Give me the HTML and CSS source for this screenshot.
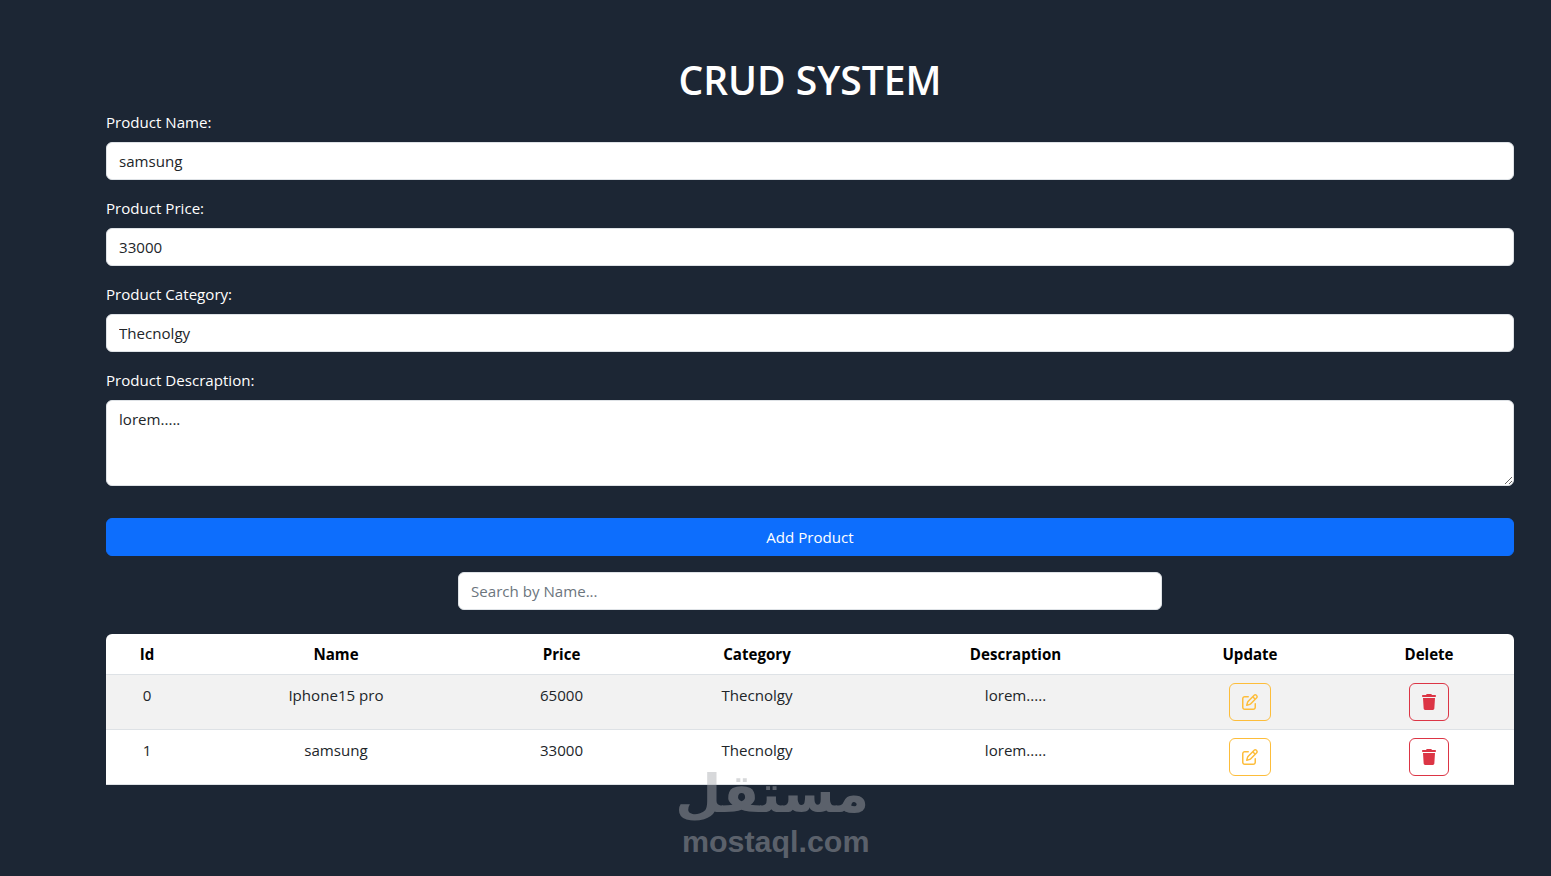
FILE: index.html
```html
<!DOCTYPE html>
<html lang="en">
<head>
    <meta charset="UTF-8">
    <meta name="viewport" content="width=device-width, initial-scale=1.0">
    <title>CRUD System</title>
    <link rel="stylesheet" href="styles.css">
</head>
<body>
    <div class="container">
        <h1 class="title">CRUD SYSTEM</h1>

        <div class="field">
            <label for="name">Product Name:</label>
            <input id="name" type="text" value="samsung">
        </div>
        <div class="field">
            <label for="price">Product Price:</label>
            <input id="price" type="text" value="33000">
        </div>
        <div class="field">
            <label for="category">Product Category:</label>
            <input id="category" type="text" value="Thecnolgy">
        </div>
        <div class="field">
            <label for="descraption">Product Descraption:</label>
            <textarea id="descraption">lorem.....</textarea>
        </div>

        <button class="add-btn">Add Product</button>

        <div class="search">
            <input type="text" placeholder="Search by Name...">
        </div>

        <table class="products">
            <colgroup>
                <col class="col-id">
                <col class="col-name">
                <col class="col-price">
                <col class="col-category">
                <col class="col-desc">
                <col class="col-update">
                <col class="col-delete">
            </colgroup>
            <thead>
                <tr>
                    <th>Id</th>
                    <th>Name</th>
                    <th>Price</th>
                    <th>Category</th>
                    <th>Descraption</th>
                    <th>Update</th>
                    <th>Delete</th>
                </tr>
            </thead>
            <tbody>
                <tr class="striped">
                    <td>0</td>
                    <td>Iphone15 pro</td>
                    <td>65000</td>
                    <td>Thecnolgy</td>
                    <td>lorem.....</td>
                    <td>
                        <button class="icon-btn update">
                            <svg viewBox="0 0 512 512"><path d="M441 58.9L453.1 71c9.4 9.4 9.4 24.6 0 33.9L424 134.1 377.9 88 407 58.9c9.4-9.4 24.6-9.4 33.9 0zM209.8 256.2L344 121.9 390.1 168 255.8 302.2c-2.9 2.9-6.5 5-10.4 6.1l-58.5 16.7 16.7-58.5c1.1-3.9 3.2-7.5 6.1-10.4zM373.1 25L175.8 222.2c-8.7 8.7-15 19.4-18.3 31.1l-28.6 100c-2.4 8.4-.1 17.4 6.1 23.6s15.2 8.5 23.6 6.1l100-28.6c11.8-3.4 22.5-9.7 31.1-18.3L487 138.9c28.1-28.1 28.1-73.7 0-101.8L474.9 25C446.8-3.1 401.2-3.1 373.1 25zM88 64C39.4 64 0 103.4 0 152V424c0 48.6 39.4 88 88 88H360c48.6 0 88-39.4 88-88V312c0-13.3-10.7-24-24-24s-24 10.7-24 24V424c0 22.1-17.9 40-40 40H88c-22.1 0-40-17.9-40-40V152c0-22.1 17.9-40 40-40H200c13.3 0 24-10.7 24-24s-10.7-24-24-24H88z"/></svg>
                        </button>
                    </td>
                    <td>
                        <button class="icon-btn delete">
                            <svg viewBox="0 0 448 512"><path d="M135.2 17.7L128 32H32C14.3 32 0 46.3 0 64S14.3 96 32 96H416c17.7 0 32-14.3 32-32s-14.3-32-32-32H320l-7.2-14.3C307.4 6.8 296.3 0 284.2 0H163.8c-12.1 0-23.2 6.8-28.6 17.7zM416 128H32L53.2 467c1.6 25.3 22.6 45 47.9 45H346.9c25.3 0 46.3-19.7 47.9-45L416 128z"/></svg>
                        </button>
                    </td>
                </tr>
                <tr>
                    <td>1</td>
                    <td>samsung</td>
                    <td>33000</td>
                    <td>Thecnolgy</td>
                    <td>lorem.....</td>
                    <td>
                        <button class="icon-btn update">
                            <svg viewBox="0 0 512 512"><path d="M441 58.9L453.1 71c9.4 9.4 9.4 24.6 0 33.9L424 134.1 377.9 88 407 58.9c9.4-9.4 24.6-9.4 33.9 0zM209.8 256.2L344 121.9 390.1 168 255.8 302.2c-2.9 2.9-6.5 5-10.4 6.1l-58.5 16.7 16.7-58.5c1.1-3.9 3.2-7.5 6.1-10.4zM373.1 25L175.8 222.2c-8.7 8.7-15 19.4-18.3 31.1l-28.6 100c-2.4 8.4-.1 17.4 6.1 23.6s15.2 8.5 23.6 6.1l100-28.6c11.8-3.4 22.5-9.7 31.1-18.3L487 138.9c28.1-28.1 28.1-73.7 0-101.8L474.9 25C446.8-3.1 401.2-3.1 373.1 25zM88 64C39.4 64 0 103.4 0 152V424c0 48.6 39.4 88 88 88H360c48.6 0 88-39.4 88-88V312c0-13.3-10.7-24-24-24s-24 10.7-24 24V424c0 22.1-17.9 40-40 40H88c-22.1 0-40-17.9-40-40V152c0-22.1 17.9-40 40-40H200c13.3 0 24-10.7 24-24s-10.7-24-24-24H88z"/></svg>
                        </button>
                    </td>
                    <td>
                        <button class="icon-btn delete">
                            <svg viewBox="0 0 448 512"><path d="M135.2 17.7L128 32H32C14.3 32 0 46.3 0 64S14.3 96 32 96H416c17.7 0 32-14.3 32-32s-14.3-32-32-32H320l-7.2-14.3C307.4 6.8 296.3 0 284.2 0H163.8c-12.1 0-23.2 6.8-28.6 17.7zM416 128H32L53.2 467c1.6 25.3 22.6 45 47.9 45H346.9c25.3 0 46.3-19.7 47.9-45L416 128z"/></svg>
                        </button>
                    </td>
                </tr>
            </tbody>
        </table>
    </div>

    <div class="watermark">
        <div class="wm-ar" lang="ar" dir="rtl">مستقل</div>
        <div class="wm-en">mostaql.com</div>
    </div>
</body>
</html>
```

FILE: styles.css
```css
*
{
    box-sizing: border-box;
}
html, body
{
    height: 100%;
}
body
{
    margin: 0;
    overflow: hidden;
    position: relative;
    background-color: #1c2634;
    color: #fff;
    font-family: "Open Sans", "Noto Sans", sans-serif;
    font-size: 15.1px;
    line-height: 24px;
}
.container
{
    padding: 56px 37px 0 106px;
}
.title
{
    margin: 0 0 6px;
    font-size: 39px;
    font-weight: 600;
    line-height: 48px;
    text-align: center;
}
.field
{
    margin-bottom: 16px;
}
label
{
    display: block;
    margin-bottom: 8px;
}
input, textarea
{
    display: block;
    width: 100%;
    height: 38px;
    padding: 6px 12px;
    border: 1px solid #dee2e6;
    border-radius: 6px;
    background-color: #fff;
    color: #212529;
    font-family: inherit;
    font-size: inherit;
    line-height: 24px;
}
input::placeholder
{
    color: #6c757d;
}
textarea
{
    height: 86px;
}
.add-btn
{
    display: block;
    width: 100%;
    height: 38px;
    margin-top: 32px;
    border: 1px solid #0d6efd;
    border-radius: 6px;
    background-color: #0d6efd;
    color: #fff;
    font-family: inherit;
    font-size: inherit;
}
.search
{
    width: 50%;
    margin: 16px auto 24px;
}

/* table */
.products
{
    width: 100%;
    table-layout: fixed;
    border-collapse: separate;
    border-spacing: 0;
    background-color: #fff;
    border-radius: 6px 6px 0 0;
    color: #212529;
    text-align: center;
}
.col-id { width: 82px; }
.col-name { width: 296px; }
.col-price { width: 155px; }
.col-category { width: 236px; }
.col-desc { width: 281px; }
.col-update { width: 188px; }
.col-delete { width: 170px; }
th, td
{
    padding: 8px;
    border-bottom: 1px solid #dee2e6;
    vertical-align: top;
}
th
{
    color: #000;
    font-weight: 700;
}
.striped td
{
    background-color: #f2f2f2;
}
.icon-btn
{
    display: inline-flex;
    align-items: center;
    justify-content: center;
    height: 38px;
    padding: 0;
    border: 1px solid;
    border-radius: 6px;
    background: transparent;
    vertical-align: top;
}
.icon-btn svg
{
    display: block;
    width: 16px;
    height: 16px;
    fill: currentColor;
}
.update
{
    width: 42px;
    color: #fdbd3a;
}
.delete
{
    width: 40px;
    color: #dc3545;
}

/* site watermark, lies over the page */
.watermark
{
    position: absolute;
    left: 682px;
    top: 765px;
    width: 187px;
    color: #a8aaaf;
    opacity: 0.45;
    text-align: center;
    font-family: "Liberation Sans", sans-serif;
    font-weight: 700;
    pointer-events: none;
}
.wm-ar
{
    font-family: "DejaVu Sans", sans-serif;
    font-size: 53px;
    line-height: 58px;
}
.wm-en
{
    margin-top: 4px;
    font-size: 30.4px;
    line-height: 28px;
}
```
